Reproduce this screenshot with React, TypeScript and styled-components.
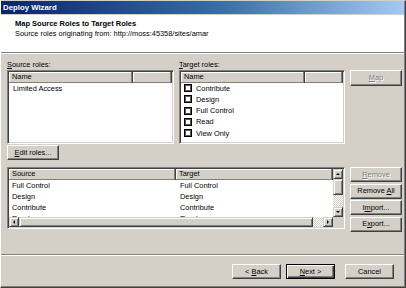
import React from "react";
import styled, { createGlobalStyle, css } from "styled-components";

const Global = createGlobalStyle`
  html, body { margin: 0; padding: 0; background: #d4d0c8; }
  body { font-family: "Liberation Sans", Arial, sans-serif; -webkit-font-smoothing: antialiased; }
  * { box-sizing: border-box; }
`;

const FONT = `"Liberation Sans", Arial, sans-serif`;

const Window = styled.div`
  width: 406px;
  height: 288px;
  background: #d4d0c8;
  border-top: 1px solid #d4d0c8;
  border-left: 1px solid #ffffff;
  border-right: 1px solid #404040;
  border-bottom: 1px solid #404040;
  font-family: ${FONT};
  font-size: 7.4px;
  color: #000;
`;

const Frame = styled.div`
  height: 100%;
  display: flex;
  flex-direction: column;
  border-right: 1px solid #808080;
  border-bottom: 1px solid #808080;
`;

const TitleBar = styled.div`
  height: 13px;
  line-height: 13px;
  padding-left: 2px;
  background: linear-gradient(to right, #0a246a 0%, #3a6ea5 55%, #a6caf0 100%);
  color: #fff;
  font-weight: bold;
  font-size: 7.8px;
`;

const Header = styled.div`
  margin-top: 1px;
  height: 38px;
  background: #fff;
  border-bottom: 1px solid #808080;
  padding: 4px 0 0 14px;
`;

const HeaderTitle = styled.div`
  font-weight: bold;
  font-size: 7.5px;
  line-height: 10px;
`;

const HeaderSub = styled.div`
  line-height: 10px;
`;

const Body = styled.div`
  flex: 1;
  border-top: 1px solid #fff;
  padding: 5px 0 0 6px;
`;

const TopGrid = styled.div`
  display: grid;
  grid-template-columns: 167px 166px 52px;
  grid-template-rows: 11px 74px;
  column-gap: 5px;
`;

const Label = styled.div`
  line-height: 11px;
  height: 11px;
`;

const ListBox = styled.div<{ $h?: number }>`
  background: #fff;
  border: 1px solid;
  border-color: #808080 #fff #fff #808080;
  box-shadow: inset 1px 1px 0 #404040, inset -1px -1px 0 #d4d0c8;
  padding: 1px;
  overflow: hidden;
  ${(p) => p.$h && css`height: ${p.$h}px;`}
`;

const ColHeader = styled.div`
  display: flex;
  height: 10.5px;
`;

const HeadCell = styled.div<{ $w?: number; $pad?: number }>`
  ${(p) => (p.$w ? css`width: ${p.$w}px; flex: none;` : css`flex: 1;`)}
  height: 100%;
  background: #d4d0c8;
  box-shadow: inset -1px -1px 0 #808080, inset 1px 1px 0 #fff;
  border-right: 1px solid #404040;
  padding-left: ${(p) => p.$pad ?? 3}px;
  line-height: 10.5px;
  white-space: nowrap;
  overflow: hidden;
`;

const Row = styled.div<{ $h: number }>`
  display: flex;
  align-items: center;
  height: ${(p) => p.$h}px;
  line-height: ${(p) => p.$h}px;
  white-space: nowrap;
`;

const Cell = styled.div<{ $w?: number; $pad?: number }>`
  ${(p) => (p.$w ? css`width: ${p.$w}px; flex: none;` : css`flex: 1;`)}
  padding-left: ${(p) => p.$pad ?? 3}px;
  overflow: hidden;
`;

const Check = styled.span`
  display: inline-block;
  width: 8px;
  height: 8px;
  margin: 0 4px 0 3px;
  border: 1px solid #000;
  box-shadow: inset 0 0 0 1px #5a5a5a;
  background: #fff;
  flex: none;
`;

const Btn = styled.button<{ $w: number; $def?: boolean; $h?: number }>`
  width: ${(p) => p.$w}px;
  height: ${(p) => p.$h ?? 15}px;
  padding: 0;
  margin: 0;
  font-family: ${FONT};
  font-size: 7.4px;
  color: #000;
  background: #d4d0c8;
  border: 1px solid;
  border-color: #fff #404040 #404040 #fff;
  box-shadow: inset -1px -1px 0 #808080;
  line-height: 1;
  flex: none;
  ${(p) =>
    p.$def &&
    css`
      border-color: #000;
      box-shadow: inset 1px 1px 0 #fff, inset -1px -1px 0 #404040, inset -2px -2px 0 #808080;
    `}
  &:disabled {
    color: #808080;
    text-shadow: 1px 1px 0 #fff;
  }
`;

const EditRow = styled.div`
  margin-top: 1px;
`;

const BottomGrid = styled.div`
  margin-top: 7px;
  display: grid;
  grid-template-columns: 338px 52px;
  column-gap: 5px;
`;

const ButtonCol = styled.div`
  display: flex;
  flex-direction: column;
  gap: 1.5px;
`;

const GridList = styled(ListBox)`
  display: grid;
  grid-template-columns: minmax(0, 1fr) 10px;
  grid-template-rows: minmax(0, 1fr) 10px;
`;

const Content = styled.div`
  overflow: hidden;
  min-height: 0;
`;

const VScroll = styled.div`
  display: flex;
  flex-direction: column;
  min-height: 0;
`;

const HScroll = styled.div`
  display: flex;
`;

const Arrow = styled.div`
  width: 10px;
  height: 10px;
  flex: none;
  background: #d4d0c8;
  border: 1px solid;
  border-color: #d4d0c8 #404040 #404040 #d4d0c8;
  box-shadow: inset 1px 1px 0 #fff, inset -1px -1px 0 #808080;
  display: flex;
  align-items: center;
  justify-content: center;
`;

const Tri = styled.span<{ $dir: "up" | "down" | "left" | "right" }>`
  width: 0;
  height: 0;
  border: 2px solid transparent;
  ${(p) =>
    p.$dir === "up"
      ? css`border-bottom-color: #000; border-top-width: 0; margin-top: -1px;`
      : p.$dir === "down"
      ? css`border-top-color: #000; border-bottom-width: 0;`
      : p.$dir === "left"
      ? css`border-right-color: #000; border-left-width: 0;`
      : css`border-left-color: #000; border-right-width: 0;`}
`;

const Thumb = styled.div<{ $size?: number }>`
  ${(p) => (p.$size ? css`flex: none; flex-basis: ${p.$size}px;` : css`flex: 1;`)}
  background: #d4d0c8;
  border: 1px solid;
  border-color: #d4d0c8 #404040 #404040 #d4d0c8;
  box-shadow: inset 1px 1px 0 #fff, inset -1px -1px 0 #808080;
`;

const Track = styled.div<{ $size?: number }>`
  ${(p) => (p.$size ? css`flex: none; flex-basis: ${p.$size}px;` : css`flex: 1;`)}
  background-color: #ece9e4;
  background-image: repeating-conic-gradient(#fff 0 25%, #d4d0c8 0 50%);
  background-size: 2px 2px;
`;

const Corner = styled.div`
  background: #d4d0c8;
`;

const Footer = styled.div`
  height: 32px;
  flex: none;
  border-top: 1px solid #808080;
  box-shadow: inset 0 1px 0 #fff;
  padding: 9px 10px 0 0;
  display: flex;
  justify-content: flex-end;
  align-items: flex-start;
`;

const Spacer = styled.div<{ $w: number }>`
  width: ${(p) => p.$w}px;
  flex: none;
`;

const targets = ["Contribute", "Design", "Full Control", "Read", "View Only"];
const mappings = [
  ["Full Control", "Full Control"],
  ["Design", "Design"],
  ["Contribute", "Contribute"],
  ["Read", "Read"],
];

export default function App() {
  return (
    <>
      <Global />
      <Window>
        <Frame>
          <TitleBar>Deploy Wizard</TitleBar>
          <Header>
            <HeaderTitle>Map Source Roles to Target Roles</HeaderTitle>
            <HeaderSub>Source roles originating from: http://moss:45358/sites/amar</HeaderSub>
          </Header>
          <Body>
            <TopGrid>
              <Label>
                <u>S</u>ource roles:
              </Label>
              <Label>
                <u>T</u>arget roles:
              </Label>
              <div />
              <ListBox>
                <ColHeader>
                  <HeadCell $w={124}>Name</HeadCell>
                  <HeadCell />
                </ColHeader>
                <Row $h={11.3}>
                  <Cell $pad={4}>Limited Access</Cell>
                </Row>
              </ListBox>
              <ListBox>
                <ColHeader>
                  <HeadCell $w={124}>Name</HeadCell>
                  <HeadCell />
                </ColHeader>
                {targets.map((t) => (
                  <Row key={t} $h={11.3}>
                    <Check />
                    {t}
                  </Row>
                ))}
              </ListBox>
              <div>
                <Btn $w={52} $h={16} disabled>
                  <u>M</u>ap
                </Btn>
              </div>
            </TopGrid>
            <EditRow>
              <Btn $w={52}>
                <u>E</u>dit roles...
              </Btn>
            </EditRow>
            <BottomGrid>
              <GridList $h={62}>
                <Content>
                  <ColHeader>
                    <HeadCell $w={167}>Source</HeadCell>
                    <HeadCell $pad={3}>Target</HeadCell>
                  </ColHeader>
                  {mappings.map(([s, t]) => (
                    <Row key={s} $h={11.3}>
                      <Cell $w={167}>{s}</Cell>
                      <Cell $pad={4}>{t}</Cell>
                    </Row>
                  ))}
                </Content>
                <VScroll>
                  <Arrow>
                    <Tri $dir="up" />
                  </Arrow>
                  <Thumb $size={16} />
                  <Track />
                  <Arrow>
                    <Tri $dir="down" />
                  </Arrow>
                </VScroll>
                <HScroll>
                  <Arrow>
                    <Tri $dir="left" />
                  </Arrow>
                  <Thumb />
                  <Track $size={10} />
                  <Arrow>
                    <Tri $dir="right" />
                  </Arrow>
                </HScroll>
                <Corner />
              </GridList>
              <ButtonCol>
                <Btn $w={52} disabled>
                  <u>R</u>emove
                </Btn>
                <Btn $w={52}>
                  Remove <u>A</u>ll
                </Btn>
                <Btn $w={52}>
                  I<u>m</u>port...
                </Btn>
                <Btn $w={52}>
                  E<u>x</u>port...
                </Btn>
              </ButtonCol>
            </BottomGrid>
          </Body>
          <Footer>
            <Btn $w={49}>
              &lt; <u>B</u>ack
            </Btn>
            <Spacer $w={5} />
            <Btn $w={49} $def>
              <u>N</u>ext &gt;
            </Btn>
            <Spacer $w={10} />
            <Btn $w={49}>Cancel</Btn>
          </Footer>
        </Frame>
      </Window>
    </>
  );
}
